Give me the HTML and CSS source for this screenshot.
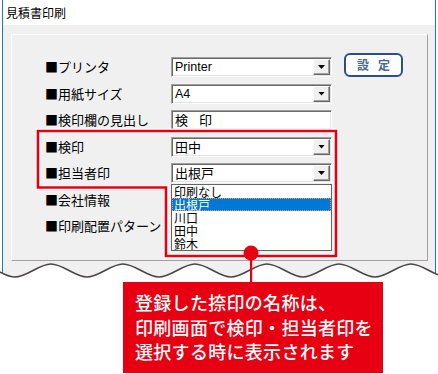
FILE: index.html
```html
<!DOCTYPE html>
<html lang="ja">
<head>
<meta charset="utf-8">
<title>見積書印刷</title>
<link rel="stylesheet" href="styles.css">
</head>
<body>
<div class="window">
  <div class="titlebar">見積書印刷</div>
  <div class="client">
    <div class="group">
      <div class="form">
        <div class="label">■プリンタ</div>
        <div class="combo latin">Printer<span class="arrow"></span></div>
        <div class="btn">設定</div>

        <div class="label">■用紙サイズ</div>
        <div class="combo latin">A4<span class="arrow"></span></div>
        <div></div>

        <div class="label">■検印欄の見出し</div>
        <div class="combo field">検　印</div>
        <div></div>

        <div class="label">■検印</div>
        <div class="combo">田中<span class="arrow"></span></div>
        <div></div>

        <div class="label">■担当者印</div>
        <div class="combo">出根戸<span class="arrow"></span>
          <ul class="list">
            <li>印刷なし</li>
            <li class="sel">出根戸</li>
            <li>川口</li>
            <li>田中</li>
            <li>鈴木</li>
          </ul>
        </div>
        <div></div>

        <div class="label">■会社情報</div>
        <div></div>
        <div></div>

        <div class="label">■印刷配置パターン</div>
        <div></div>
        <div></div>
      </div>
    </div>
  </div>
</div>

<svg class="annot" width="438" height="374" viewBox="0 0 438 374">
  <path class="cut" d="M-21,264 C-9,264 3,277 15,277 S39,264 51,264 S75,277 87,277 S111,264 123,264 S147,277 159,277 S183,264 195,264 S219,277 231,277 S255,264 267,264 S291,277 303,277 S327,264 339,264 S363,277 375,277 S399,264 411,264 S435,277 447,277 L447,380 L-21,380 Z"/>
  <path class="wave" d="M-21,264 C-9,264 3,277 15,277 S39,264 51,264 S75,277 87,277 S111,264 123,264 S147,277 159,277 S183,264 195,264 S219,277 231,277 S255,264 267,264 S291,277 303,277 S327,264 339,264 S363,277 375,277 S399,264 411,264 S435,277 447,277"/>
  <path class="halo" d="M38,131 H336 V256 H166 V187.5 H38 Z"/>
  <path class="frame" d="M38,131 H336 V256 H166 V187.5 H38 Z"/>
  <rect class="stem" x="250" y="253" width="2.2" height="31"/>
  <circle class="dot" cx="251" cy="253" r="7.5"/>
</svg>

<div class="callout">登録した捺印の名称は、<br>印刷画面で検印・担当者印を<br>選択する時に表示されます</div>
</body>
</html>
```

FILE: styles.css
```css
* { box-sizing: border-box; }

html, body {
  margin: 0;
  padding: 0;
  background: #ffffff;
}

body {
  position: relative;
  width: 438px;
  height: 374px;
  overflow: hidden;
  font-family: "Noto Sans CJK JP", sans-serif;
  color: #000;
}

.window {
  margin-left: 2px;
  width: 434px;
  height: 374px;
  border-left: 1px solid #1979ca;
  border-right: 1px solid #1979ca;
  background: #f0f0f0;
}

.titlebar {
  height: 25px;
  background: #ffffff;
  padding-left: 3px;
  font-size: 12px;
  line-height: 25px;
}

.client {
  padding: 9px 7px 0 8px;
}

.group {
  height: 227px;
  border: 1px solid;
  border-color: #ffffff #a0a0a0 #a0a0a0 #ffffff;
  padding: 22px 0 0 33px;
}

.form {
  display: grid;
  grid-template-columns: 114px 161px 59px;
  column-gap: 12px;
  grid-auto-rows: 20px;
  row-gap: 6.5px;
}

.label {
  font-size: 13px;
  line-height: 20px;
  white-space: nowrap;
}

.combo {
  position: relative;
  height: 20px;
  background: #ffffff;
  border: 1px solid;
  border-color: #a0a0a0 #ffffff #ffffff #a0a0a0;
  box-shadow: inset 1px 1px 0 #696969, inset -1px -1px 0 #e3e3e3;
  padding-left: 3px;
  font-size: 13px;
  line-height: 18px;
  white-space: nowrap;
}

.combo.latin {
  font-family: "Liberation Sans", sans-serif;
  font-size: 12.5px;
}

.combo.field {
  letter-spacing: -1px;
}

.arrow {
  position: absolute;
  right: 1px;
  top: 1px;
  width: 17px;
  height: 16px;
  background: #f0f0f0;
  border: 1px solid;
  border-color: #ffffff #696969 #696969 #ffffff;
  box-shadow: inset -1px -1px 0 #a0a0a0;
}

.arrow::after {
  content: "";
  position: absolute;
  left: 4px;
  top: 5px;
  width: 7px;
  height: 4px;
  background: #000;
  clip-path: polygon(0 0, 100% 0, 50% 100%);
}

.btn {
  height: 24px;
  margin-top: -4px;
  border: 2px solid #2c4e8e;
  border-radius: 6px;
  background: #ffffff;
  color: #4a6796;
  font-size: 12px;
  font-weight: bold;
  line-height: 20px;
  letter-spacing: 9px;
  padding-left: 9px;
  text-align: center;
}

.list {
  position: absolute;
  left: -1px;
  top: calc(100% + 2px);
  width: 161px;
  margin: 0;
  padding: 0;
  list-style: none;
  background: #ffffff;
  border: 1px solid #646464;
  z-index: 2;
}

.list li {
  height: 13px;
  padding-left: 2px;
  font-size: 12px;
  line-height: 13px;
}

.list li.sel {
  background: #0078d7;
  color: #ffffff;
  outline: 1px dotted #f5a040;
  outline-offset: -1px;
}

.annot {
  position: absolute;
  left: 0;
  top: 0;
  pointer-events: none;
  z-index: 3;
}

.cut { fill: #ffffff; }

.wave {
  fill: none;
  stroke: #4a4646;
  stroke-width: 1.5;
}

.halo {
  fill: none;
  stroke: #ffffff;
  stroke-width: 5;
}

.frame {
  fill: none;
  stroke: #e60012;
  stroke-width: 2.6;
}

.stem, .dot { fill: #e60012; }

.callout {
  position: absolute;
  left: 123px;
  top: 282px;
  width: 260px;
  height: 91px;
  z-index: 4;
  background: #e60012;
  color: #ffffff;
  padding: 8px 0 0 12px;
  font-size: 18px;
  font-weight: 500;
  line-height: 24.5px;
  letter-spacing: 0.3px;
  white-space: nowrap;
}
```
